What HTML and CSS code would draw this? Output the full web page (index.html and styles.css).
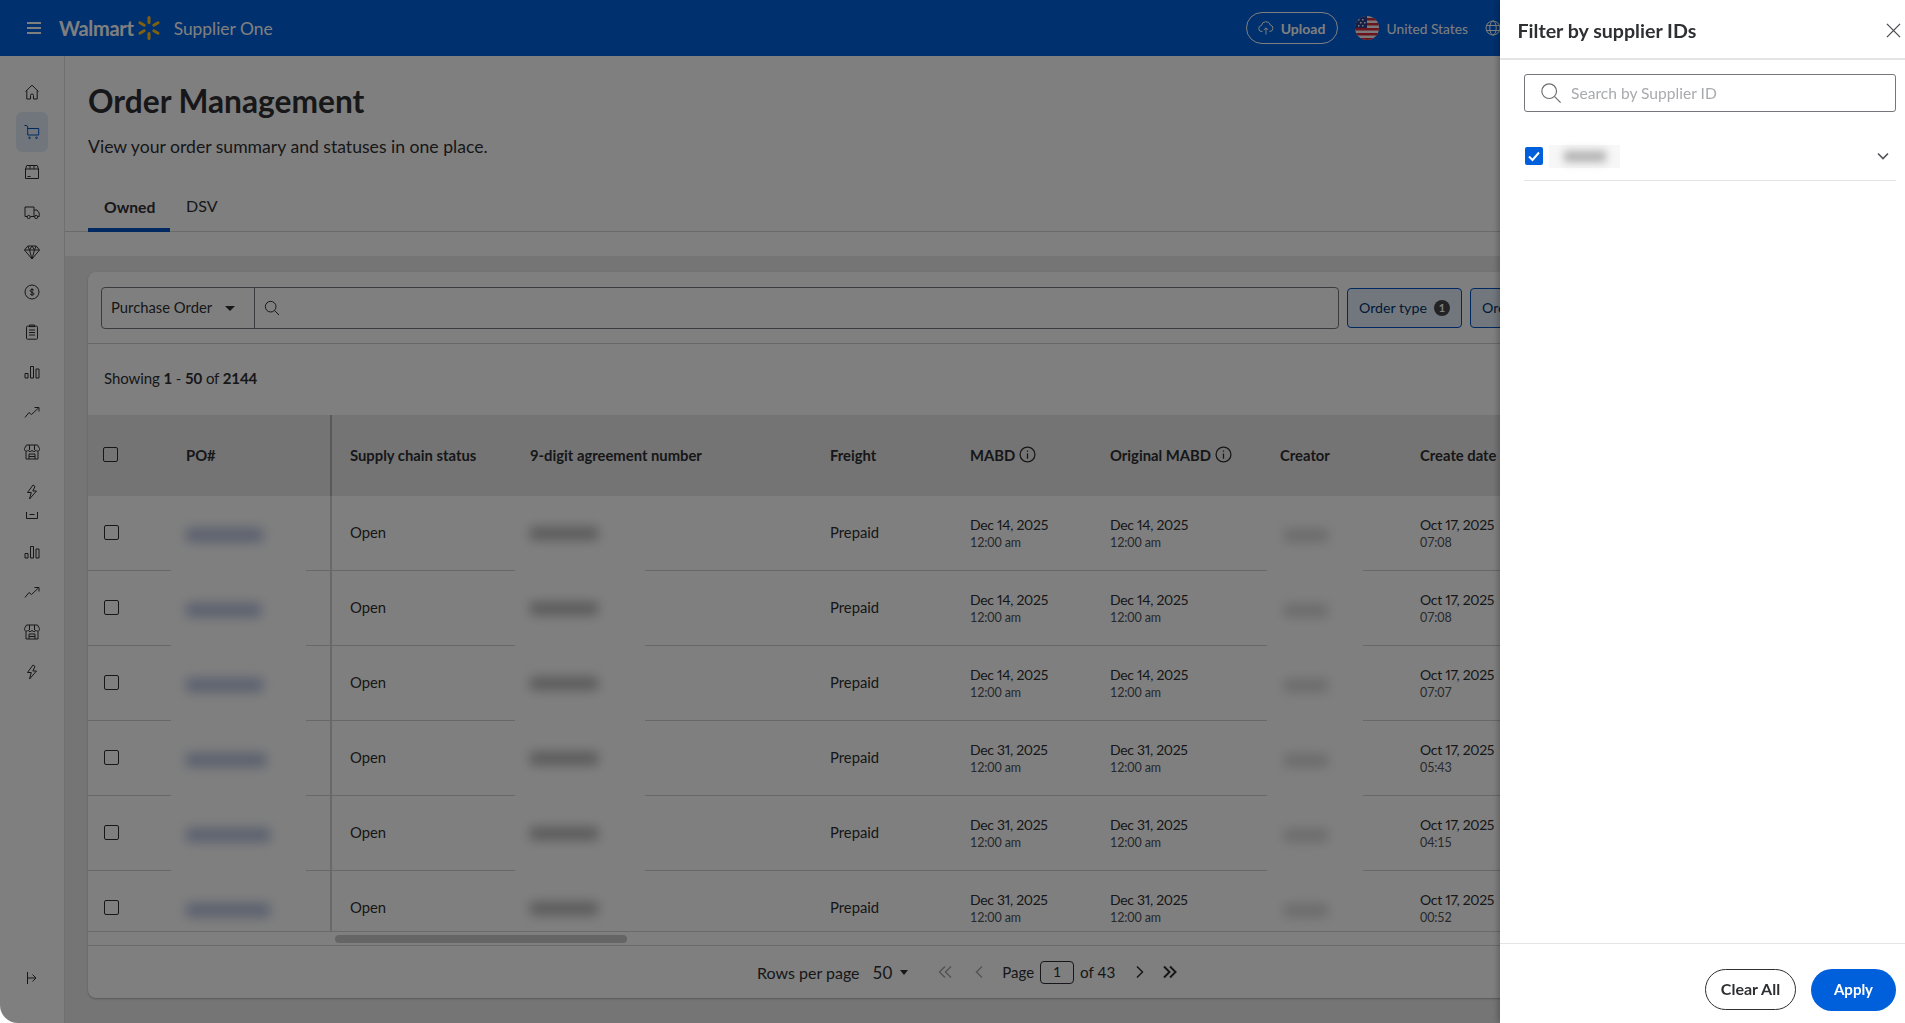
FILE: index.html
```html
<!DOCTYPE html>
<html lang="en">
<head>
<meta charset="utf-8">
<title>Order Management</title>
<link rel="stylesheet" href="styles.css">
</head>
<body>
<svg class="defs" aria-hidden="true">
  <symbol id="i-home" viewBox="0 0 16 16"><path d="M1.5 7.5 8 1.2l6.5 6.3M2.8 6.5V15h3.7v-3.5a1.5 1.5 0 0 1 3 0V15h3.7V6.5"/></symbol>
  <symbol id="i-box" viewBox="0 0 16 16"><path d="M1.5 5 2.8 1.5h10.4L14.5 5v9.5h-13zM1.5 5h13M6 1.5V5M10 1.5V5M3.5 12.5h3"/></symbol>
  <symbol id="i-truck" viewBox="0 0 16 16"><path d="M3 12.5H1V3h9v9.5H6.500M10 6h3l2.200 3v3.500h-1.400M10.200 12.500h.4"/><circle cx="4.700" cy="13" r="1.600"/><circle cx="12.200" cy="13" r="1.600"/></symbol>
  <symbol id="i-gem" viewBox="0 0 16 16"><path d="M3.800 2h8.400L15.500 6 8 15 .5 6zM.5 6h15M3.800 2l1.700 4L8 15l2.500-9 1.700-4M5.500 6 8 2l2.500 4"/></symbol>
  <symbol id="i-dollar" viewBox="0 0 16 16"><circle cx="8" cy="8" r="7"/><path d="M10 6.300C9.400 5.300 6.100 5 6.100 6.700S10 8.200 10 9.900 6.600 11 6 9.900M8 4.200v7.600"/></symbol>
  <symbol id="i-clip" viewBox="0 0 16 16"><rect x="2.500" y="2.200" width="11" height="13" rx="1"/><path d="M5.500 1h5v1.600h-5zM5 6h6M5 8.500h6M5 11h6"/></symbol>
  <symbol id="i-bars" viewBox="0 0 16 16"><path d="M1 9.500h3V14H1zM6.500 2.500h3V14h-3zM12 5h3v9h-3z"/></symbol>
  <symbol id="i-trend" viewBox="0 0 16 16"><path d="M1 13.500 5 8.500l2.500 2L14.500 4M10.500 3.500h4.500v4"/></symbol>
  <symbol id="i-store" viewBox="0 0 16 16"><path d="M2.500 1h11l2 3.500v1.200a2 2 0 0 1-3.700.5 2 2 0 0 1-3.800 0 2 2 0 0 1-3.800 0A2 2 0 0 1 .5 5.700V4.500zM2 7.500V15h12V7.500M5 15v-5h6v5M5 12.500h6M5.500 1v5M10.500 1v5"/></symbol>
  <symbol id="i-bolt" viewBox="0 0 16 16"><path d="M9 1 3.500 8.500h3.800L5.500 15l7-8H8.800L11 2.500z"/></symbol>
  <symbol id="i-search" viewBox="0 0 24 24"><circle cx="10" cy="10" r="8"/><path d="m16 16 6.500 6.500"/></symbol>
  <symbol id="i-info" viewBox="0 0 16 16"><circle cx="8" cy="8" r="7"/><path d="M8 7v5M8 4.200v1.300"/></symbol>
</svg>

<div class="app">
  <header class="topbar">
    <button class="menu-btn" aria-label="Menu"><span></span><span></span><span></span></button>
    <span class="brand">Walmart</span>
    <svg class="spark" viewBox="0 0 24 24"><g><rect x="10.500" y="0" width="3" height="8" rx="1.500"/><rect x="10.500" y="16" width="3" height="8" rx="1.500"/><rect x="10.500" y="0" width="3" height="8" rx="1.500" transform="rotate(60 12 12)"/><rect x="10.500" y="16" width="3" height="8" rx="1.500" transform="rotate(60 12 12)"/><rect x="10.500" y="0" width="3" height="8" rx="1.500" transform="rotate(-60 12 12)"/><rect x="10.500" y="16" width="3" height="8" rx="1.500" transform="rotate(-60 12 12)"/></g></svg>
    <span class="product">Supplier One</span>
    <div class="topbar-right">
      <button class="upload-btn">
        <svg class="ico16 ico-white" viewBox="0 0 16 16"><path d="M4.500 11.500H4a3 3 0 0 1-.5-6A4.500 4.500 0 0 1 12.300 5 3.300 3.300 0 0 1 12 11.500h-.5M8 14.500V8M5.800 10 8 7.800l2.200 2.200"/></svg>
        <span>Upload</span>
      </button>
      <svg class="flag" viewBox="0 0 24 24">
        <defs><clipPath id="flagclip"><circle cx="12" cy="12" r="12"/></clipPath></defs>
        <g clip-path="url(#flagclip)">
          <rect width="24" height="24" fill="#f4f4f4"/>
          <path d="M0 2h24v2.500H0zM0 7h24v2.500H0zM0 12h24v2.500H0zM0 17h24v2.500H0zM0 22h24v2H0z" fill="#d8293a"/>
          <rect width="12" height="12" fill="#2a3f8f"/>
          <path d="M3 3h1.500v1.500H3zM7 3h1.500v1.500H7zM5 6h1.500v1.500H5zM9 6h1.500v1.500H9zM3 9h1.500v1.500H3zM7 9h1.500v1.500H7z" fill="#fff"/>
        </g>
      </svg>
      <span class="country">United States</span>
      <svg class="ico16 ico-white globe" viewBox="0 0 16 16"><circle cx="8" cy="8" r="7"/><ellipse cx="8" cy="8" rx="3.200" ry="7"/><path d="M1.300 5.500h13.400M1.300 10.500h13.400"/></svg>
    </div>
  </header>

  <div class="main">
    <nav class="sidebar">
      <a class="nav-item"><svg class="nav-ico"><use href="#i-home"/></svg></a>
      <a class="nav-item nav-active">
        <svg class="nav-ico" viewBox="0 0 16 16"><path d="M.5 1.500h2.300l.9 1.500v8h11V4.500H3.700"/><circle cx="5.500" cy="13.800" r=".8"/><circle cx="12.500" cy="13.800" r=".8"/></svg>
      </a>
      <a class="nav-item"><svg class="nav-ico"><use href="#i-box"/></svg></a>
      <a class="nav-item"><svg class="nav-ico"><use href="#i-truck"/></svg></a>
      <a class="nav-item"><svg class="nav-ico"><use href="#i-gem"/></svg></a>
      <a class="nav-item"><svg class="nav-ico"><use href="#i-dollar"/></svg></a>
      <a class="nav-item"><svg class="nav-ico"><use href="#i-clip"/></svg></a>
      <a class="nav-item"><svg class="nav-ico"><use href="#i-bars"/></svg></a>
      <a class="nav-item"><svg class="nav-ico"><use href="#i-trend"/></svg></a>
      <a class="nav-item"><svg class="nav-ico"><use href="#i-store"/></svg></a>
      <a class="nav-item"><svg class="nav-ico"><use href="#i-bolt"/></svg></a>
      <div class="nav-sliver"><svg class="sliver-ico" viewBox="0 0 12 7"><path d="M.5 0v6.500h11V0M3.500 2.500h5"/></svg></div>
      <a class="nav-item"><svg class="nav-ico"><use href="#i-bars"/></svg></a>
      <a class="nav-item"><svg class="nav-ico"><use href="#i-trend"/></svg></a>
      <a class="nav-item"><svg class="nav-ico"><use href="#i-store"/></svg></a>
      <a class="nav-item"><svg class="nav-ico"><use href="#i-bolt"/></svg></a>
      <a class="nav-collapse"><svg class="collapse-ico" viewBox="0 0 12 14"><path d="M1.500 1v12M1.500 7h8M6.500 3.500 10 7l-3.500 3.500"/></svg></a>
    </nav>

    <main class="content">
      <section class="page-head">
        <h1 class="page-title">Order Management</h1>
        <p class="page-sub">View your order summary and statuses in one place.</p>
        <div class="tabs">
          <a class="tab tab-active">Owned</a>
          <a class="tab">DSV</a>
        </div>
      </section>

      <section class="page-body">
        <div class="card">
          <div class="toolbar">
            <div class="search-group">
              <div class="po-select"><span>Purchase Order</span><i class="caret"></i></div>
              <div class="po-input"><svg class="ico16 ico-dark" viewBox="0 0 24 24"><use href="#i-search"/></svg></div>
            </div>
            <button class="filter-btn">Order type <b class="badge">1</b></button>
            <button class="filter-btn">Order status</button>
          </div>
          <div class="showing">Showing&nbsp;<b>1</b>&nbsp;-&nbsp;<b>50</b>&nbsp;of&nbsp;<b>2144</b></div>

          <div class="tr thead">
            <div class="cell"><i class="check check-head"></i></div>
            <div class="cell pad15">PO#</div>
            <div class="cell cell-div"></div>
            <div class="cell pad18">Supply chain status</div>
            <div class="cell pad15 span2">9-digit agreement number</div>
            <div class="cell">Freight</div>
            <div class="cell">MABD <svg class="info"><use href="#i-info"/></svg></div>
            <div class="cell">Original MABD <svg class="info"><use href="#i-info"/></svg></div>
            <div class="cell pad13 span2">Creator</div>
            <div class="cell">Create date</div>
          </div>

          <div class="tbody">
            <div class="tr row">
              <div class="cell"><i class="check"></i></div>
              <div class="cell cell-mask"><i class="smudge smudge-link w77"></i></div>
              <div class="cell cell-div"></div>
              <div class="cell pad18">Open</div>
              <div class="cell cell-mask"><i class="smudge smudge-num"></i></div>
              <div class="cell"></div>
              <div class="cell">Prepaid</div>
              <div class="cell date"><span>Dec 14, 2025</span><small>12:00 am</small></div>
              <div class="cell date"><span>Dec 14, 2025</span><small>12:00 am</small></div>
              <div class="cell cell-mask"><i class="smudge smudge-name"></i></div>
              <div class="cell"></div>
              <div class="cell date"><span>Oct 17, 2025</span><small>07:08</small></div>
            </div>
            <div class="tr row">
              <div class="cell"><i class="check"></i></div>
              <div class="cell cell-mask"><i class="smudge smudge-link w75"></i></div>
              <div class="cell cell-div"></div>
              <div class="cell pad18">Open</div>
              <div class="cell cell-mask"><i class="smudge smudge-num"></i></div>
              <div class="cell"></div>
              <div class="cell">Prepaid</div>
              <div class="cell date"><span>Dec 14, 2025</span><small>12:00 am</small></div>
              <div class="cell date"><span>Dec 14, 2025</span><small>12:00 am</small></div>
              <div class="cell cell-mask"><i class="smudge smudge-name"></i></div>
              <div class="cell"></div>
              <div class="cell date"><span>Oct 17, 2025</span><small>07:08</small></div>
            </div>
            <div class="tr row">
              <div class="cell"><i class="check"></i></div>
              <div class="cell cell-mask"><i class="smudge smudge-link w77"></i></div>
              <div class="cell cell-div"></div>
              <div class="cell pad18">Open</div>
              <div class="cell cell-mask"><i class="smudge smudge-num"></i></div>
              <div class="cell"></div>
              <div class="cell">Prepaid</div>
              <div class="cell date"><span>Dec 14, 2025</span><small>12:00 am</small></div>
              <div class="cell date"><span>Dec 14, 2025</span><small>12:00 am</small></div>
              <div class="cell cell-mask"><i class="smudge smudge-name"></i></div>
              <div class="cell"></div>
              <div class="cell date"><span>Oct 17, 2025</span><small>07:07</small></div>
            </div>
            <div class="tr row">
              <div class="cell"><i class="check"></i></div>
              <div class="cell cell-mask"><i class="smudge smudge-link w80"></i></div>
              <div class="cell cell-div"></div>
              <div class="cell pad18">Open</div>
              <div class="cell cell-mask"><i class="smudge smudge-num"></i></div>
              <div class="cell"></div>
              <div class="cell">Prepaid</div>
              <div class="cell date"><span>Dec 31, 2025</span><small>12:00 am</small></div>
              <div class="cell date"><span>Dec 31, 2025</span><small>12:00 am</small></div>
              <div class="cell cell-mask"><i class="smudge smudge-name"></i></div>
              <div class="cell"></div>
              <div class="cell date"><span>Oct 17, 2025</span><small>05:43</small></div>
            </div>
            <div class="tr row">
              <div class="cell"><i class="check"></i></div>
              <div class="cell cell-mask"><i class="smudge smudge-link w84"></i></div>
              <div class="cell cell-div"></div>
              <div class="cell pad18">Open</div>
              <div class="cell cell-mask"><i class="smudge smudge-num"></i></div>
              <div class="cell"></div>
              <div class="cell">Prepaid</div>
              <div class="cell date"><span>Dec 31, 2025</span><small>12:00 am</small></div>
              <div class="cell date"><span>Dec 31, 2025</span><small>12:00 am</small></div>
              <div class="cell cell-mask"><i class="smudge smudge-name"></i></div>
              <div class="cell"></div>
              <div class="cell date"><span>Oct 17, 2025</span><small>04:15</small></div>
            </div>
            <div class="tr row">
              <div class="cell"><i class="check"></i></div>
              <div class="cell cell-mask"><i class="smudge smudge-link w84"></i></div>
              <div class="cell cell-div"></div>
              <div class="cell pad18">Open</div>
              <div class="cell cell-mask"><i class="smudge smudge-num"></i></div>
              <div class="cell"></div>
              <div class="cell">Prepaid</div>
              <div class="cell date"><span>Dec 31, 2025</span><small>12:00 am</small></div>
              <div class="cell date"><span>Dec 31, 2025</span><small>12:00 am</small></div>
              <div class="cell cell-mask"><i class="smudge smudge-name"></i></div>
              <div class="cell"></div>
              <div class="cell date"><span>Oct 17, 2025</span><small>00:52</small></div>
            </div>
          </div>

          <div class="scroll-track"><div class="scroll-thumb"></div></div>

          <div class="pager">
            <span class="pager-label">Rows per page</span>
            <span class="pager-size">50</span><i class="caret caret-sm"></i>
            <svg class="pg pg-first pg-off" viewBox="0 0 16 16"><path d="M8 2.500 2.500 8 8 13.500M14 2.500 8.500 8l5.500 5.500"/></svg>
            <svg class="pg pg-prev pg-off" viewBox="0 0 16 16"><path d="M11 2.500 5.500 8l5.500 5.500"/></svg>
            <span class="pager-page">Page</span>
            <span class="page-box">1</span>
            <span class="pager-of">of 43</span>
            <svg class="pg pg-next" viewBox="0 0 16 16"><path d="M5 2.500 10.500 8 5 13.500"/></svg>
            <svg class="pg pg-last" viewBox="0 0 16 16"><path d="M2 2.500 7.500 8 2 13.500M8 2.500 13.500 8 8 13.500"/></svg>
          </div>
        </div>
      </section>
    </main>
  </div>
</div>

<div class="scrim"></div>

<aside class="drawer">
  <div class="drawer-head">
    <h2 class="drawer-title">Filter by supplier IDs</h2>
    <svg class="drawer-close" viewBox="0 0 16 16"><path d="M1 1l14 14M15 1 1 15"/></svg>
  </div>
  <div class="drawer-body">
    <div class="drawer-search">
      <svg class="drawer-search-ico" viewBox="0 0 24 24"><use href="#i-search"/></svg>
      <span class="placeholder">Search by Supplier ID</span>
    </div>
    <div class="supplier-row">
      <span class="blue-check"><svg viewBox="0 0 18 18"><path d="M4 9.500 7.500 13 14 5.500"/></svg></span>
      <span class="supplier-mask"><i class="supplier-smudge"></i></span>
      <svg class="chev" viewBox="0 0 12 8"><path d="M1 1.500 6 6.500l5-5"/></svg>
    </div>
  </div>
  <div class="drawer-foot">
    <button class="btn-outline">Clear All</button>
    <button class="btn-primary">Apply</button>
  </div>
</aside>
</body>
</html>
```
FILE: styles.css
```css
* { box-sizing: border-box; }
html, body { margin: 0; height: 100%; }
body {
  background: #fff;
  color: #2e2f32;
  font-family: Lato, "Open Sans", "Liberation Sans", sans-serif;
  font-size: 15px;
  overflow: hidden;
}
.defs { display: none; }
button { font-family: inherit; cursor: pointer; }

.app { display: flex; flex-direction: column; height: 1023px; border-bottom-left-radius: 18px; overflow: hidden; }

/* top bar */
.topbar { flex: 0 0 56px; display: flex; align-items: center; background: #0060dc; color: #fff; padding: 0 404px 0 27px; }
.menu-btn { background: none; border: 0; padding: 0; width: 14px; display: flex; flex-direction: column; gap: 3.500px; }
.menu-btn span { display: block; height: 1.500px; background: #fff; }
.brand { margin-left: 18px; font-size: 20px; font-weight: 700; letter-spacing: -0.3px; }
.spark { width: 24px; height: 24px; margin-left: 3px; fill: #ffc220; }
.product { margin-left: 13px; font-size: 17.400px; }
.topbar-right { margin-left: auto; display: flex; align-items: center; }
.upload-btn { height: 32px; width: 92px; border: 1px solid #fff; border-radius: 16px; background: none; color: #fff; font-size: 14px; font-weight: 700; display: flex; align-items: center; justify-content: center; gap: 7px; padding: 0; }
.flag { width: 24px; height: 24px; margin-left: 17px; }
.country { margin-left: 8px; font-size: 13.800px; }
.globe { margin-left: 17px; }
.ico16 { width: 16px; height: 16px; fill: none; stroke-width: 1; }
.ico-white { stroke: #fff; }
.ico-dark { stroke: #2e2f32; stroke-width: 1.500; }

.main { flex: 1; display: flex; min-height: 0; }

/* side nav */
.sidebar { flex: 0 0 65px; border-right: 1px solid #e0e0e0; background: #fff; padding: 16px 0 0 16px; display: flex; flex-direction: column; }
.nav-item { flex: 0 0 40px; width: 32px; display: flex; align-items: center; justify-content: center; border-radius: 6px; }
.nav-ico { width: 16px; height: 16px; fill: none; stroke: #2e2f32; stroke-width: 1; }
.nav-active { background: #e3edf8; }
.nav-active .nav-ico { stroke: #0053c2; }
.nav-sliver { flex: 0 0 20px; width: 32px; display: flex; justify-content: center; align-items: flex-start; }
.sliver-ico { width: 12px; height: 7px; fill: none; stroke: #2e2f32; stroke-width: 1; }
.nav-collapse { margin-top: auto; margin-bottom: 38px; width: 32px; display: flex; justify-content: center; }
.collapse-ico { width: 12px; height: 14px; fill: none; stroke: #2e2f32; stroke-width: 1; }

/* page */
.content { flex: 1; min-width: 0; display: flex; flex-direction: column; background: #eaeaea; }
.page-head { flex: 0 0 200px; background: #fff; padding: 25px 0 0 23px; }
.page-title { margin: 0; font-size: 31.700px; line-height: 40px; font-weight: 700; }
.page-sub { margin: 14px 0 0; font-size: 17.600px; line-height: 24px; }
.tabs { display: flex; height: 45px; margin: 28px 0 0 -23px; padding-left: 23px; border-bottom: 1px solid #d5d5d5; }
.tab { width: 65px; padding: 8px 0 0 16px; font-size: 16px; line-height: 22px; }
.tab-active { width: 82px; padding-top: 9px; font-weight: 700; text-align: left; border-bottom: 4px solid #0053c2; height: 45px; font-size: 15.700px; }

.page-body { flex: 1; min-height: 0; padding: 16px 24px 25px 23px; }
.card { height: 726px; background: #fff; border-radius: 8px; box-shadow: 0 1px 2px rgba(0,0,0,.25); overflow: hidden; display: flex; flex-direction: column; }

.toolbar { flex: 0 0 72px; display: flex; align-items: center; padding: 0 13px; gap: 8px; border-bottom: 1px solid #cfcfcf; }
.search-group { width: 1238px; height: 42px; display: flex; border: 1px solid #74767c; border-radius: 4px; }
.po-select { flex: 0 0 153px; display: flex; align-items: center; justify-content: space-between; padding: 0 19px 2px 9px; border-right: 1px solid #74767c; font-size: 14.800px; }
.caret { width: 0; height: 0; border-left: 5px solid transparent; border-right: 5px solid transparent; border-top: 5px solid #2e2f32; }
.po-select .caret { margin-top: 3px; }
.po-input { flex: 1; display: flex; align-items: center; padding-left: 9px; }
.filter-btn { flex: 0 0 auto; width: 115px; height: 40px; border: 1px solid #0053c2; border-radius: 4px; background: #e4eefa; color: #00356f; font-size: 14.200px; display: flex; align-items: center; justify-content: space-between; padding: 0 11px; }
.filter-btn:last-child { width: 150px; }
.badge { width: 16px; height: 16px; border-radius: 50%; background: #46474a; color: #fff; font-size: 11px; line-height: 16px; text-align: center; }

.showing { flex: 0 0 71px; display: flex; align-items: center; padding: 0 0 3px 16px; font-size: 15px; letter-spacing: -0.1px; }

.tr { display: grid; grid-template-columns: 83px 135px 26px 183px 130px 185px 140px 140px 157px 96px 57px 200px; }
.thead { flex: 0 0 81px; background: #e8e8e8; font-weight: 700; font-size: 14.800px; }
.thead .cell { padding-bottom: 2px; }
.thead .cell:first-child { padding-bottom: 0; }
.cell { display: flex; align-items: center; min-width: 0; white-space: nowrap; }
.pad15 { padding-left: 15px; }
.pad18 { padding-left: 18px; }
.pad13 { padding-left: 13px; }
.span2 { grid-column: span 2; }
.cell-div { border-right: 2px solid #d2d2d2; }
.thead .cell-div { border-right: 2px solid #b0b0b0; padding-bottom: 0; }
.check { width: 15px; height: 15px; margin-left: 16px; border: 1.600px solid #2e2f32; border-radius: 2px; display: block; }
.check-head { margin-left: 15px; margin-top: -2px; }
.info { width: 17px; height: 17px; margin-left: 4px; fill: none; stroke: #2e2f32; stroke-width: 1.200; }

.tbody { flex: 0 0 435px; overflow: hidden; }
.row { height: 75px; border-bottom: 1px solid #d0d0d0; font-size: 14.800px; }
.row .cell { padding-bottom: 3px; }
.row .cell:first-child { padding-bottom: 2px; }
.row .cell.date, .row .cell-div, .row .cell-mask { padding-bottom: 0; }
.cell-mask { height: 75px; background: #fff; padding-left: 15px; }
.smudge { display: block; filter: blur(6px); }
.smudge-link { height: 14px; background: #b4c0dc; margin-top: 2px; }
.w75 { width: 75px; }
.w77 { width: 77px; }
.w80 { width: 80px; }
.w84 { width: 84px; }
.smudge-num { width: 68px; height: 13px; background: #b4b4b4; margin-top: -1px; }
.smudge-name { width: 44px; height: 13px; background: #d6d6d6; margin-left: 2px; margin-top: 3px; }
.date { flex-direction: column; align-items: flex-start; justify-content: center; }
.date span { font-size: 14px; line-height: 18px; margin-top: -1px; letter-spacing: -0.3px; font-variant-numeric: proportional-nums; }
.date small { font-size: 12.500px; line-height: 17px; color: #515357; letter-spacing: -0.1px; }

.scroll-track { flex: 0 0 14px; padding: 3px 0 0 247px; border-top: 1px solid #d5d5d5; }
.scroll-thumb { width: 292px; height: 8px; border-radius: 4px; background: #cbcbcb; }

.pager { flex: 1; border-top: 1px solid #d5d5d5; display: flex; align-items: center; padding-left: 669px; font-size: 16px; }
.pager-size { margin-left: 13px; font-size: 17px; }
.caret-sm { margin-left: 8px; border-left-width: 4.500px; border-right-width: 4.500px; }
.pg { width: 16px; height: 16px; fill: none; stroke: #2e2f32; stroke-width: 1.500; }
.pg-off { stroke: #a9aaad; }
.pg-first { margin-left: 29px; }
.pg-prev { margin-left: 18px; }
.pager-page { margin-left: 15px; font-size: 15px; }
.page-box { width: 34px; height: 23px; margin-left: 6px; border: 1.500px solid #2e2f32; border-radius: 4px; text-align: center; line-height: 20px; font-size: 14px; }
.pager-of { margin-left: 6px; font-size: 15.300px; }
.pg-next { margin-left: 17px; stroke-width: 1.500; }
.pg-last { margin-left: 14px; stroke-width: 2; }

/* overlay + drawer */
.scrim { position: fixed; inset: 0; background: rgba(0,0,0,.5); border-bottom-left-radius: 18px; z-index: 10; }
.drawer { position: fixed; top: 0; right: 0; bottom: 0; width: 405px; background: #fff; z-index: 20; display: flex; flex-direction: column; box-shadow: -2px 0 6px rgba(0,0,0,.25); }
.drawer-head { flex: 0 0 60px; display: flex; align-items: center; justify-content: space-between; padding: 2px 4px 0 17.500px; border-bottom: 2px solid #e3e4e5; }
.drawer-title { margin: 0; font-size: 19.600px; font-weight: 700; }
.drawer-close { width: 15px; height: 15px; fill: none; stroke: #46474a; stroke-width: 1.300; }
.drawer-body { flex: 1; padding: 14px 9px 0 24px; }
.drawer-search { height: 38px; border: 1px solid #74767c; border-radius: 3px; display: flex; align-items: center; padding-left: 15px; }
.drawer-search-ico { width: 22px; height: 22px; fill: none; stroke: #6d6e71; stroke-width: 1.300; }
.placeholder { margin-left: 9px; color: #a9aaad; font-size: 15.600px; }
.supplier-row { height: 50px; margin-top: 19px; padding: 1px 0 0 1px; display: flex; align-items: center; border-bottom: 1px solid #e3e4e5; }
.blue-check { width: 18px; height: 18px; border-radius: 2px; background: #0060dc; display: block; }
.blue-check svg { display: block; fill: none; stroke: #fff; stroke-width: 2; }
.supplier-mask { margin-left: 6px; width: 71px; height: 23px; background: #f7f7f7; display: flex; align-items: center; justify-content: center; }
.supplier-smudge { display: block; width: 42px; height: 11px; background: #b0b0b0; filter: blur(4px); }
.chev { margin-left: auto; margin-right: 7px; width: 12px; height: 8px; fill: none; stroke: #515357; stroke-width: 1.600; }
.drawer-foot { flex: 0 0 80px; border-top: 1px solid #e3e4e5; display: flex; justify-content: flex-end; gap: 15px; padding: 25px 9px 0 0; }
.btn-outline { width: 91px; height: 41px; border: 1px solid #2e2f32; border-radius: 21px; background: #fff; color: #2e2f32; font-size: 16px; font-weight: 700; padding-bottom: 3px; }
.btn-primary { width: 85px; height: 42px; border: 0; border-radius: 21px; background: #0060dc; color: #fff; font-size: 15px; font-weight: 700; padding-bottom: 3px; }
```
